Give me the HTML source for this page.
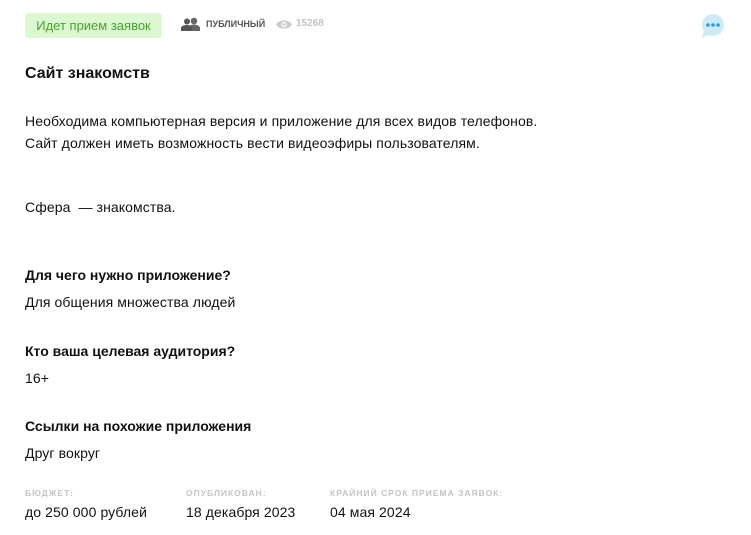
<!DOCTYPE html>
<html><head><meta charset="utf-8"><style>
body{margin:0;width:751px;height:535px;background:#fff;font-family:"Liberation Sans",sans-serif;color:#111;position:relative;overflow:hidden}
.a{position:absolute;white-space:nowrap}
.badge{left:25px;top:13px;width:137px;height:25px;background:#dcf8d0;border-radius:3px;color:#4aa22e;font-size:13px;line-height:25px;text-align:center}
.p{font-size:14px;line-height:22px;letter-spacing:0.1px}
.h{font-size:14px;font-weight:bold}
.l{font-size:8.5px;font-weight:bold;color:#c4c4c4;letter-spacing:1px}
</style></head><body>
<div class="a badge">Идет прием заявок</div>
<svg class="a" style="left:181px;top:17px" width="20" height="14" viewBox="0 0 20 14"><circle cx="13" cy="4" r="3.3" fill="#666"/><path d="M7 14v-3c0-2 3-3.5 6-3.5s6 1.5 6 3.5v3z" fill="#666"/><circle cx="6" cy="4.5" r="3" fill="#555"/><path d="M0 14v-3c0-2 3-3 6-3s5 1 5 3v3z" fill="#555"/></svg>
<div class="a" style="left:206px;top:19px;font-size:9px;font-weight:bold;color:#555">ПУБЛИЧНЫЙ</div>
<svg class="a" style="left:276px;top:19px" width="16" height="11" viewBox="0 0 16 11"><path d="M0 5.5C3 0 13 0 16 5.5 13 11 3 11 0 5.5z" fill="#c9ced2"/><circle cx="8" cy="5.5" r="2.6" fill="#fff"/><circle cx="8" cy="5.5" r="1.4" fill="#c9ced2"/></svg>
<div class="a" style="left:296px;top:18px;font-size:10px;font-weight:bold;color:#bfc4c8">15268</div>
<svg class="a" style="left:700px;top:13px" width="26" height="26" viewBox="0 0 26 26"><circle cx="13" cy="12" r="11" fill="#cfeaf7"/><path d="M4 18L2 25 10 21z" fill="#cfeaf7"/><circle cx="8" cy="12" r="1.8" fill="#2b9be0"/><circle cx="13" cy="12" r="1.8" fill="#2b9be0"/><circle cx="18" cy="12" r="1.8" fill="#2b9be0"/></svg>
<div class="a" style="left:25px;top:65px;font-size:16px;font-weight:bold">Сайт знакомств</div>
<div class="a p" style="left:25px;top:110px">Необходима компьютерная версия и приложение для всех видов телефонов.<br>Сайт должен иметь возможность вести видеоэфиры пользователям.</div>
<div class="a p" style="left:25px;top:196px">Сфера&nbsp; — знакомства.</div>
<div class="a h" style="left:25px;top:267px">Для чего нужно приложение?</div>
<div class="a p" style="left:25px;top:291px">Для общения множества людей</div>
<div class="a h" style="left:25px;top:343px">Кто ваша целевая аудитория?</div>
<div class="a p" style="left:25px;top:367px">16+</div>
<div class="a h" style="left:25px;top:418px">Ссылки на похожие приложения</div>
<div class="a p" style="left:25px;top:442px">Друг вокруг</div>
<div class="a l" style="left:25px;top:488px">БЮДЖЕТ:</div>
<div class="a l" style="left:186px;top:488px">ОПУБЛИКОВАН:</div>
<div class="a l" style="left:330px;top:488px">КРАЙНИЙ СРОК ПРИЕМА ЗАЯВОК:</div>
<div class="a p" style="left:25px;top:501px">до 250 000 рублей</div>
<div class="a p" style="left:186px;top:501px">18 декабря 2023</div>
<div class="a p" style="left:330px;top:501px">04 мая 2024</div>
</body></html>
